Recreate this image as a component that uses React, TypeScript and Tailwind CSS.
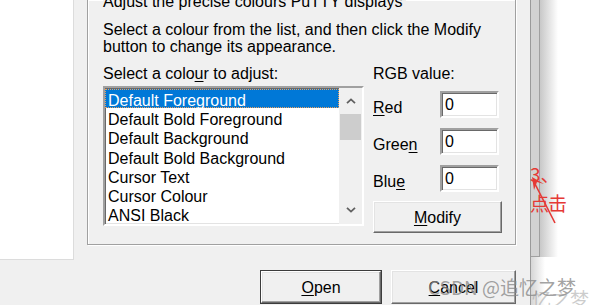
import React from 'react';

const items = [
  'Default Foreground',
  'Default Bold Foreground',
  'Default Background',
  'Default Bold Background',
  'Cursor Text',
  'Cursor Colour',
  'ANSI Black',
];

const sunken =
  'border-2 border-t-[#a0a0a0] border-l-[#a0a0a0] border-b-white border-r-white shadow-[inset_1px_1px_0_#696969,inset_-1px_-1px_0_#e3e3e3]';

const raised =
  'bg-[#f0f0f0] border border-t-white border-l-white border-b-[#696969] border-r-[#696969] shadow-[inset_-1px_-1px_0_#a0a0a0,inset_1px_1px_0_#e3e3e3]';

const ValueRow = ({ label, u }: { label: string; u: number }) => (
  <div className="flex h-[27px] mb-[10px]">
    <div className="w-[67px] pt-[8px] leading-[17px]">
      {label.slice(0, u)}
      <span className="underline underline-offset-2">{label[u]}</span>
      {label.slice(u + 1)}
    </div>
    <div className={`w-[59px] h-[27px] bg-white flex items-center pl-[3px] leading-[17px] ${sunken}`}>0</div>
  </div>
);

const Chevron = ({ up }: { up?: boolean }) => (
  <svg width="10" height="6" viewBox="0 0 10 6" className="block">
    <path d={up ? 'M1 5.2 L5 1.4 L9 5.2' : 'M1 0.8 L5 4.6 L9 0.8'} fill="none" stroke="#606060" strokeWidth="1.8" />
  </svg>
);

export default function App() {
  return (
    <div className="relative w-[593px] h-[305px] overflow-hidden bg-white flex font-['Liberation_Sans',sans-serif] text-[16px] text-black">
      {/* dialog */}
      <div className="w-[531px] h-full shrink-0 bg-[#f0f0f0] border-r border-[#9a9a9a] flex flex-col">
        <div className="flex h-[270px] shrink-0">
          <div className="w-[74px] h-[260px] bg-white border-r border-b border-[#dcdcdc] shrink-0" />

          <div className="ml-[13px] mt-[-1px] w-[429px] h-[246px] border border-[#a0a0a0] shadow-[inset_1px_1px_0_#fff,1px_1px_0_#fff] pl-[15px] flex flex-col">
            <div className="mt-[-7px] leading-[17px] bg-[#f0f0f0] self-start pr-1">Adjust the precise colours PuTTY displays</div>
            <div className="mt-[11px] leading-[17px]">
              Select a colour from the list, and then click the Modify
              <br />
              button to change its appearance.
            </div>

            <div className="flex mt-[10px]">
              <div className="w-[261px] flex flex-col">
                <div className="leading-[17px]">
                  Select a colo<span className="underline underline-offset-2">u</span>r to adjust:
                </div>
                <div className={`mt-[4px] h-[140px] bg-white flex ${sunken}`}>
                  <div className="w-[234px] flex flex-col pt-[1px]">
                    {items.map((it, i) => (
                      <div
                        key={it}
                        className={
                          i === 0
                            ? 'h-[19.2px] leading-[17px] pt-[2px] pl-[2px] bg-[#0078d7] text-white border border-dotted border-[#e8a060] whitespace-nowrap'
                            : 'h-[19.2px] leading-[17px] pt-[3px] pl-[3px] whitespace-nowrap'
                        }
                      >
                        {it}
                      </div>
                    ))}
                  </div>
                  <div className="w-[23px] bg-[#f0f0f0] flex flex-col items-center">
                    <div className="h-[26px] flex items-center justify-center">
                      <Chevron up />
                    </div>
                    <div className="w-[21px] h-[26px] bg-[#cdcdcd]" />
                    <div className="flex-1" />
                    <div className="h-[26px] flex items-center justify-center pb-[2px]">
                      <Chevron />
                    </div>
                  </div>
                </div>
              </div>

              <div className="ml-[9px] w-[129px] flex flex-col">
                <div className="leading-[17px] mb-[9px]">RGB value:</div>
                <ValueRow label="Red" u={0} />
                <ValueRow label="Green" u={4} />
                <ValueRow label="Blue" u={3} />
                <div className={`h-[32px] w-[129px] flex items-center justify-center leading-[17px] -mt-[1px] ${raised}`}>
                  <span>
                    <span className="underline underline-offset-2">M</span>odify
                  </span>
                </div>
              </div>
            </div>
          </div>
        </div>

        <div className="flex pl-[260px] gap-[9px]">
          <div className="w-[122px] h-[34px] border border-[#3c3c3c]">
            <div className={`w-full h-full flex items-center justify-center leading-[17px] ${raised}`}>
              <span>
                <span className="underline underline-offset-2">O</span>pen
              </span>
            </div>
          </div>
          <div className={`w-[125px] h-[34px] flex items-center justify-center leading-[17px] ${raised}`}>
            <span>
              <span className="underline underline-offset-2">C</span>ancel
            </span>
          </div>
        </div>
      </div>

      {/* window edge and shadow behind */}
      <div className="flex flex-col flex-1">
        <div className="flex h-[257px]">
          <div className="w-[9px] h-full bg-[#d2d2d2] border-r border-b border-[#a0a0a0]" />
          <div className="w-[18px] h-full bg-gradient-to-r from-[#c8c8c8] to-white" />
        </div>
        <div className="flex-1 flex">
          <div className="w-[14px] h-full bg-gradient-to-r from-[#d6d6d6] to-white" />
        </div>
      </div>

      {/* red annotation */}
      <div className="absolute left-[530px] top-[160px] w-[50px] h-[70px] text-[#e53935] font-['Noto_Sans_CJK_SC',sans-serif]">
        <div className="text-[19px] leading-[22px] mt-[3px]">3、</div>
        <div className="text-[19px] leading-[22px] mt-[7px] tracking-[-1px]">点击</div>
        <svg className="absolute left-0 top-0" width="50" height="70" viewBox="0 0 50 70">
          <path d="M25 63 L3 20" stroke="#e53935" strokeWidth="1.6" fill="none" />
          <path d="M2 17 L4 30 L7 22 L14 24 Z" fill="#e53935" />
        </svg>
      </div>

      {/* watermark */}
      <div className="absolute left-[428px] top-[275px] text-[19px] leading-[24px] text-[#8a8a8a]/80 font-['Noto_Sans_CJK_SC',sans-serif] whitespace-nowrap">
        CSDN @追忆之梦
      </div>
      <div className="absolute left-[532px] top-[287px] text-[19px] leading-[24px] text-[#9a9a9a]/50 font-['Noto_Sans_CJK_SC',sans-serif] whitespace-nowrap">
        忆之梦
      </div>
    </div>
  );
}
